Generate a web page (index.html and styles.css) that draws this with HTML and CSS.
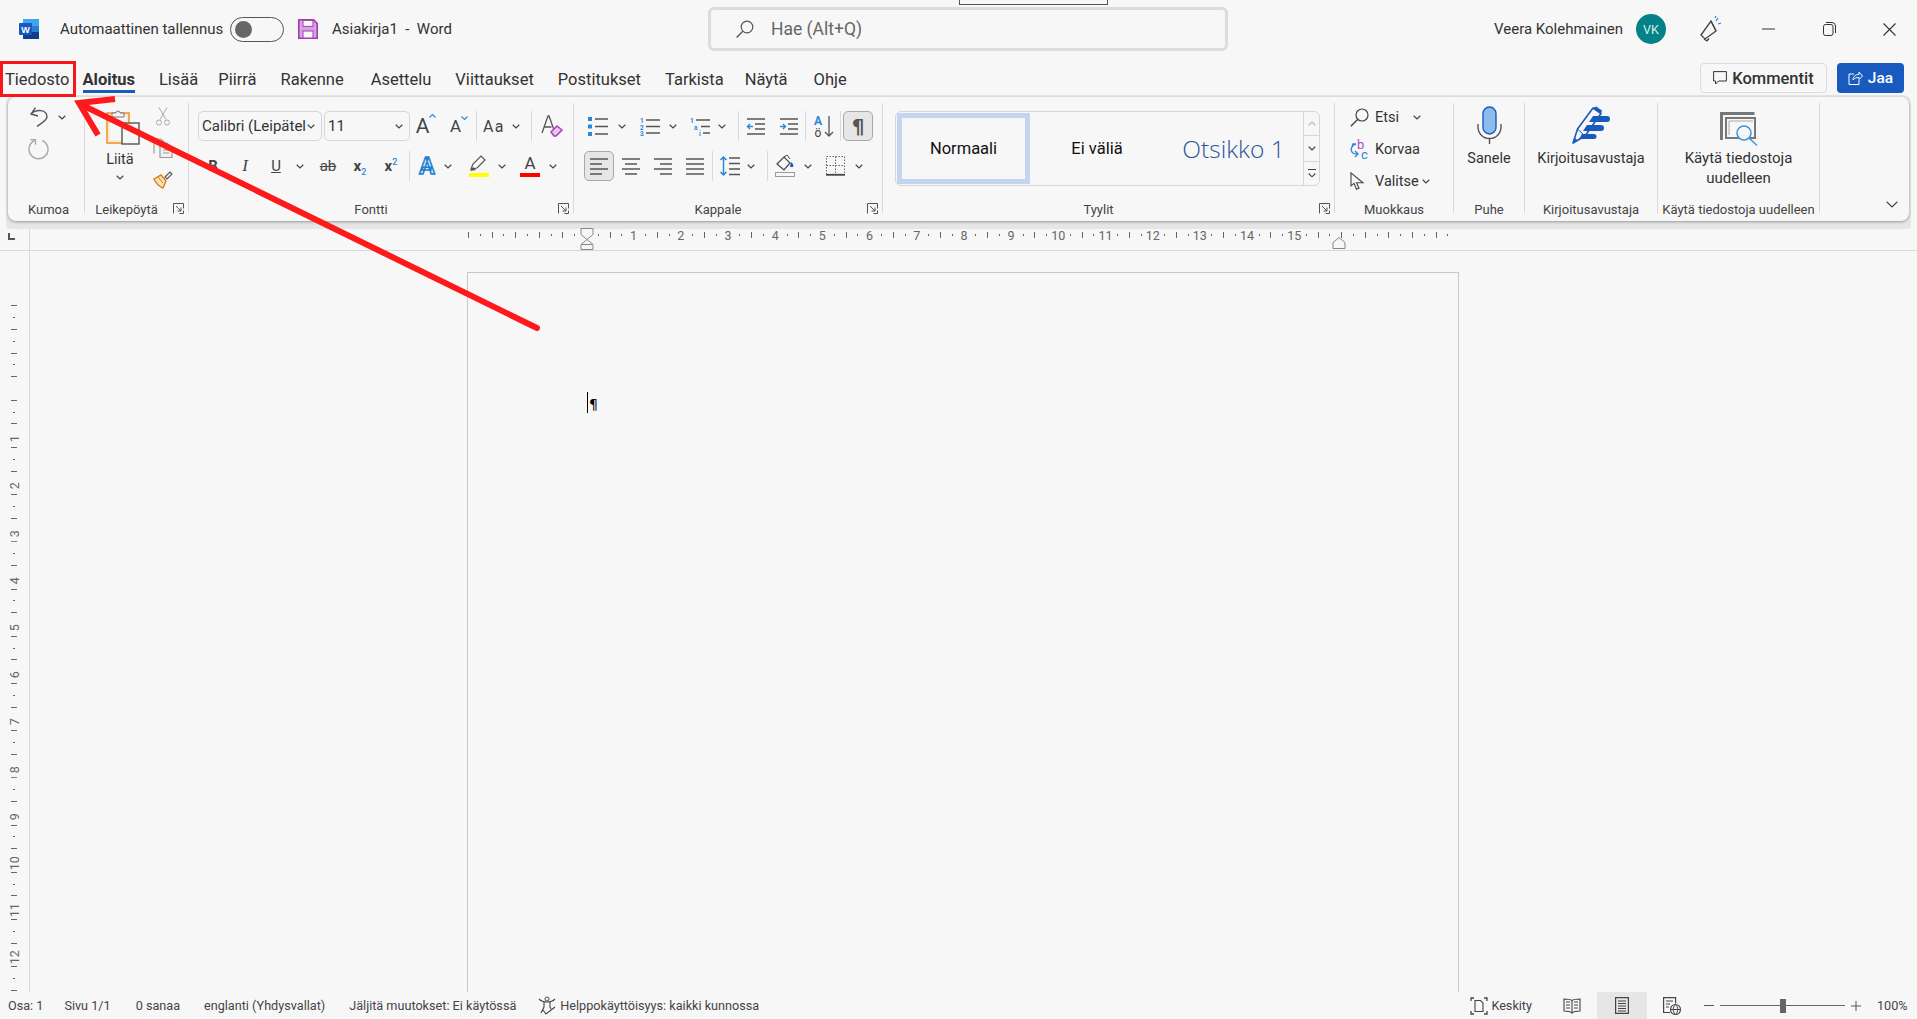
FILE: index.html
```html
<!DOCTYPE html>
<html lang="fi">
<head>
    <meta charset="UTF-8">
    <meta name="viewport" content="width=device-width, initial-scale=1.0">
    <title>Asiakirja1 - Word</title>
    <link rel="stylesheet" href="styles.css">
</head>
<body>
    <svg class="sprite" width="0" height="0">
        <symbol id="chev" viewBox="0 0 8 5"><path d="M.7.8l3.3 3.2L7.300.8" fill="none" stroke="#444" stroke-width="1.200"/></symbol>
        <symbol id="launcher" viewBox="0 0 11 11"><path d="M.5 10.500V.5h10v5M3 3l5 5M8 4.500V8H4.500M6.500 10.500h4v-3" fill="none" stroke="#555"/></symbol>
        <symbol id="align-left" viewBox="0 0 20 18"><path d="M1 2h18M1 7h12M1 12h18M1 17h12" stroke="#555" stroke-width="1.600"/></symbol>
        <symbol id="align-center" viewBox="0 0 20 18"><path d="M1 2h18M4 7h12M1 12h18M4 17h12" stroke="#555" stroke-width="1.600"/></symbol>
        <symbol id="align-right" viewBox="0 0 20 18"><path d="M1 2h18M7 7h12M1 12h18M7 17h12" stroke="#555" stroke-width="1.600"/></symbol>
        <symbol id="align-just" viewBox="0 0 20 18"><path d="M1 2h18M1 7h18M1 12h18M1 17h18" stroke="#555" stroke-width="1.600"/></symbol>
    </svg>

    <header class="titlebar">
        <div class="title-left">
            <svg class="word-logo" width="20" height="20" viewBox="0 0 20 20">
                <rect x="4" y="0" width="16" height="7" fill="#41a5ee"/>
                <rect x="4" y="7" width="16" height="6" fill="#2b7cd3"/>
                <rect x="4" y="13" width="16" height="7" fill="#103f91"/>
                <rect x="0" y="4" width="13" height="12" rx="1" fill="#185abd"/>
                <text x="6.500" y="13.500" class="word-w">W</text>
            </svg>
            <span class="autosave">Automaattinen tallennus</span>
            <span class="toggle"><i class="toggle-dot"></i></span>
            <svg class="save-icon" width="20" height="20" viewBox="0 0 20 20">
                <path d="M.8.8h14.800l3.600 3.600v14.800H.800z" fill="#d9a3e2" stroke="#a23cb3" stroke-width="1.600"/>
                <rect x="5" y="1.400" width="10" height="6" fill="#f7f7f7" stroke="#a23cb3"/>
                <rect x="5" y="12" width="10" height="7" fill="#f7f7f7" stroke="#a23cb3"/>
            </svg>
            <span class="doc-title">Asiakirja1 &nbsp;-&nbsp; Word</span>
        </div>
        <div class="search">
            <svg width="18" height="18" viewBox="0 0 18 18"><circle cx="11" cy="7" r="5.800" fill="none" stroke="#555" stroke-width="1.200"/><path d="M6.800 11.200L.6 17.500" stroke="#555" stroke-width="1.300"/></svg>
            <span>Hae (Alt+Q)</span>
        </div>
        <div class="title-right">
            <span class="user">Veera Kolehmainen</span>
            <span class="avatar">VK</span>
            <svg class="feedback" width="22" height="26" viewBox="0 0 22 26"><path d="M2 19L12 5l5 10-11 8z M5 23l3 1.800 2-2.300" fill="none" stroke="#444" stroke-width="1.300"/><path d="M12 5l5 10" stroke="#444" stroke-width="1.300"/><path d="M17 5l2-3M19 8l3-1M16 2l1-2" stroke="#2b88d8" stroke-width="1.300"/></svg>
            <svg class="win-min" width="13" height="2" viewBox="0 0 13 2"><path d="M0 1h13" stroke="#333"/></svg>
            <svg class="win-max" width="13" height="14" viewBox="0 0 13 14"><rect x=".5" y="2.500" width="9.500" height="11" rx="2" fill="none" stroke="#333"/><path d="M3 .5h6a3.500 3.500 0 0 1 3.500 3.500v7" fill="none" stroke="#333"/></svg>
            <svg class="win-close" width="13" height="13" viewBox="0 0 13 13"><path d="M.5.5l12 12M12.500.5l-12 12" stroke="#333" stroke-width="1.100"/></svg>
        </div>
    </header>

    <nav class="tabs">
        <span class="tab tab-file">Tiedosto</span>
        <span class="tab active">Aloitus</span>
        <span class="tab tab-insert">Lisää</span>
        <span class="tab">Piirrä</span>
        <span class="tab tab-design">Rakenne</span>
        <span class="tab">Asettelu</span>
        <span class="tab">Viittaukset</span>
        <span class="tab">Postitukset</span>
        <span class="tab tab-review">Tarkista</span>
        <span class="tab tab-view">Näytä</span>
        <span class="tab">Ohje</span>
        <div class="share">
            <button class="btn-comments">
                <svg width="14" height="14" viewBox="0 0 14 14"><path d="M.6.6h12.800v9.400H5.500L2.600 13v-3H.6z" fill="none" stroke="#333"/></svg>
                Kommentit
            </button>
            <button class="btn-share">
                <svg width="15" height="14" viewBox="0 0 15 14"><path d="M6 3H1v10.500h10V9M5 9c0-4 3-5.500 6-5.500V1l3.500 4L11 8.500V6.500C8.500 6.500 6.500 7 5 9z" fill="none" stroke="#fff"/></svg>
                Jaa
            </button>
        </div>
    </nav>

    <div class="ribbon-wrap">
        <div class="ribbon">
            <section class="group g-undo">
                <div class="group-body undo-rows">
                    <div class="row">
                        <span class="t w22 ml19"><svg width="20" height="20" viewBox="0 0 20 20"><path d="M7.500.6L3 7l7 2M3 7C8 2 19 2 19 10c0 3-5 6-10 9.500" fill="none" stroke="#555" stroke-width="1.400"/></svg></span>
                        <span class="t w26"><svg class="ch"><use href="#chev"/></svg></span>
                    </div>
                    <div class="row">
                        <span class="t w22 ml19"><svg width="21" height="21" viewBox="0 0 21 21"><path d="M6.800 2.500a9.500 9.500 0 1 0 7.400 0" fill="none" stroke="#aaa" stroke-width="1.400"/><path d="M2.500 1.800h5v5" fill="none" stroke="#aaa" stroke-width="1.400"/></svg></span>
                    </div>
                </div>
                <div class="group-label undo-label"><span>Kumoa</span></div>
            </section>

            <section class="group g-clip">
                <div class="group-body clip-body">
                    <div class="paste">
                        <svg width="34" height="37" viewBox="0 0 34 37">
                            <rect x="1" y="5" width="22" height="30" fill="#fbeccf" stroke="#e8912d" stroke-width="1.500"/>
                            <rect x="4" y="8" width="16" height="24" fill="#f7f7f7"/>
                            <path d="M6 9V5h4a2 2 0 0 1 4 0h4v4z" fill="#f7f7f7" stroke="#777"/>
                            <rect x="16" y="15" width="17" height="21" fill="#f7f7f7" stroke="#555" stroke-width="1.400"/>
                        </svg>
                        <span class="paste-text">Liitä</span>
                        <svg class="ch paste-ch"><use href="#chev"/></svg>
                    </div>
                    <div class="clip-side">
                        <span class="t h26"><svg width="14" height="19" viewBox="0 0 14 19"><path d="M3 .5l7 12M11 .5l-7 12" stroke="#aaa"/><circle cx="3" cy="15.500" r="2.500" fill="none" stroke="#aaa"/><circle cx="11" cy="15.500" r="2.500" fill="none" stroke="#aaa"/></svg></span>
                        <span class="t h38"><svg width="20" height="20" viewBox="0 0 20 20"><path d="M1 15.500V1h7l3 3" fill="none" stroke="#999" stroke-width="1.200"/><path d="M7 5h7l5 5v9.500H7z" fill="#f0f0f0" stroke="#999" stroke-width="1.200"/><path d="M10 12h6M10 15h6" stroke="#999"/></svg></span>
                        <span class="t h24"><svg width="20" height="20" viewBox="0 0 20 20"><path d="M12 8l5-5 2 2-5 5z" fill="#f7f7f7" stroke="#555" stroke-width="1.100"/><path d="M1 10l7-4 5 6-3 7c-3-1-7-5-9-9z" fill="#fbe2bb" stroke="#dd7e12" stroke-width="1.400"/><path d="M5 8l5 6" stroke="#dd7e12"/></svg></span>
                    </div>
                </div>
                <div class="group-label"><span>Leikepöytä</span><svg class="launcher"><use href="#launcher"/></svg></div>
            </section>

            <section class="group g-font">
                <div class="group-body rows">
                    <div class="row pl9">
                        <div class="combo w124"><span>Calibri (Leipätel</span><svg class="ch"><use href="#chev"/></svg></div>
                        <i class="w2"></i>
                        <div class="combo w86"><span>11</span><svg class="ch"><use href="#chev"/></svg></div>
                        <span class="t w32 grow-a">A<svg width="7" height="4" viewBox="0 0 7 4"><path d="M.5 3.500l3-3 3 3" fill="none" stroke="#2b88d8" stroke-width="1.200"/></svg></span>
                        <span class="t w34 shrink-a">A<svg width="7" height="4" viewBox="0 0 7 4"><path d="M.5.5l3 3 3-3" fill="none" stroke="#2b88d8" stroke-width="1.200"/></svg></span>
                        <i class="sep"></i>
                        <span class="t w34 case-a">Aa</span>
                        <span class="t w10"><svg class="ch"><use href="#chev"/></svg></span>
                        <i class="w10"></i>
                        <i class="sep"></i>
                        <span class="t w40"><svg width="22" height="22" viewBox="0 0 22 22"><path d="M1 18L7 1h1l5 14M3.500 12h7" fill="none" stroke="#555" stroke-width="1.300"/><path d="M10 17l6-6 5 4-6 6h-2z" fill="#e9c6ee" stroke="#a742b5" stroke-width="1.500"/></svg></span>
                    </div>
                    <div class="row pl8">
                        <span class="t w32 fmt fmt-b">B</span>
                        <span class="t w32 fmt fmt-i">I</span>
                        <span class="t w30 fmt fmt-u">U</span>
                        <span class="t w18"><svg class="ch"><use href="#chev"/></svg></span>
                        <span class="t w38 fmt fmt-s">ab</span>
                        <span class="t w26 fmt-x">x<sub>2</sub></span>
                        <span class="t w36 fmt-x">x<sup>2</sup></span>
                        <i class="sep"></i>
                        <span class="t w34"><svg width="24" height="24" viewBox="0 0 24 24"><text x="12" y="20" class="effect-a">A</text></svg></span>
                        <span class="t w8"><svg class="ch"><use href="#chev"/></svg></span>
                        <i class="w12"></i>
                        <span class="t w30"><svg width="20" height="22" viewBox="0 0 20 22"><path d="M2 14l2-5 8-8 4 4-8 8z" fill="#f7f7f7" stroke="#555" stroke-width="1.200"/><path d="M1 16l3-4 3 3z" fill="#555"/><rect y="18" width="20" height="4" fill="#ffff00"/></svg></span>
                        <span class="t w16"><svg class="ch"><use href="#chev"/></svg></span>
                        <i class="w5"></i>
                        <span class="t w30 color-a">A<i class="color-bar"></i></span>
                        <span class="t w16"><svg class="ch"><use href="#chev"/></svg></span>
                    </div>
                </div>
                <div class="group-label"><span>Fontti</span><svg class="launcher"><use href="#launcher"/></svg></div>
            </section>

            <section class="group g-para">
                <div class="group-body rows">
                    <div class="row pl8">
                        <span class="t w32"><svg width="20" height="19" viewBox="0 0 20 19"><path d="M0 0h4v4H0zM0 7.500h4v4H0zM0 15h4v4H0z" fill="#2b88d8"/><path d="M7 2h13M7 9.500h13M7 17h13" stroke="#555" stroke-width="1.500"/></svg></span>
                        <span class="t w16"><svg class="ch"><use href="#chev"/></svg></span>
                        <i class="w3"></i>
                        <span class="t w34"><svg width="20" height="19" viewBox="0 0 20 19"><text x="0" y="6" class="tiny-num">1</text><text x="0" y="12.500" class="tiny-num">2</text><text x="0" y="19" class="tiny-num">3</text><path d="M6 3h14M6 9.500h14M6 16h14" stroke="#555" stroke-width="1.500"/></svg></span>
                        <span class="t w12"><svg class="ch"><use href="#chev"/></svg></span>
                        <i class="w6"></i>
                        <span class="t w30"><svg width="20" height="19" viewBox="0 0 20 19"><text x="0" y="6" class="tiny-num">1</text><text x="4" y="12.500" class="tiny-num">a</text><text x="9" y="19" class="tiny-num">i</text><path d="M6 3h14M11 9.500h9M13 16h7" stroke="#555" stroke-width="1.500"/></svg></span>
                        <span class="t w14"><svg class="ch"><use href="#chev"/></svg></span>
                        <i class="w9"></i>
                        <i class="sep"></i>
                        <span class="t w34"><svg width="18" height="17" viewBox="0 0 18 17"><path d="M0 1h18M8 6h10M8 11h10M0 16h18" stroke="#555" stroke-width="1.400"/><path d="M6 8.500H.5M3 6L.5 8.500 3 11" fill="none" stroke="#2b88d8" stroke-width="1.400"/></svg></span>
                        <span class="t w32"><svg width="18" height="17" viewBox="0 0 18 17"><path d="M0 1h18M8 6h10M8 11h10M0 16h18" stroke="#555" stroke-width="1.400"/><path d="M0 8.500h5.500M3 6l2.500 2.500L3 11" fill="none" stroke="#2b88d8" stroke-width="1.400"/></svg></span>
                        <i class="sep"></i>
                        <span class="t w34"><svg width="20" height="23" viewBox="0 0 20 23"><text x="5" y="10" class="sort-a">A</text><text x="5" y="22" class="sort-o">ö</text><path d="M16 1v20M12 17l4 4 4-4" fill="none" stroke="#555" stroke-width="1.300"/></svg></span>
                        <i class="sep"></i>
                        <i class="w2"></i>
                        <span class="t w30 pressed pilcrow">¶</span>
                    </div>
                    <div class="row pl10">
                        <span class="t w30 pressed"><svg class="align"><use href="#align-left"/></svg></span>
                        <span class="t w34"><svg class="align"><use href="#align-center"/></svg></span>
                        <span class="t w30"><svg class="align"><use href="#align-right"/></svg></span>
                        <span class="t w34"><svg class="align"><use href="#align-just"/></svg></span>
                        <i class="sep"></i>
                        <span class="t w34"><svg width="20" height="20" viewBox="0 0 20 20"><path d="M9 2h11M9 7.500h11M9 13h11M9 18.500h11" stroke="#555" stroke-width="1.500"/><path d="M3.500 1v18M.5 4l3-3 3 3M.5 16l3 3 3-3" fill="none" stroke="#2b88d8" stroke-width="1.500"/></svg></span>
                        <span class="t w8"><svg class="ch"><use href="#chev"/></svg></span>
                        <i class="w12"></i>
                        <i class="sep"></i>
                        <span class="t w34"><svg width="20" height="22" viewBox="0 0 20 22"><path d="M2 9l7-7 6 6-6 7z" fill="#f7f7f7" stroke="#444" stroke-width="1.200"/><path d="M9 2l3-2 3 4" fill="none" stroke="#444"/><path d="M16 7c2 2 3 3 2 5h-3z" fill="#185abd"/><rect x=".5" y="17.500" width="19" height="4" fill="#f7f7f7" stroke="#999"/></svg></span>
                        <span class="t w12"><svg class="ch"><use href="#chev"/></svg></span>
                        <i class="w6"></i>
                        <span class="t w30"><svg width="19" height="20" viewBox="0 0 19 20"><path d="M.5.500h18v18h-18zM9.500.5v18M.5 9.500h18" fill="none" stroke="#666" stroke-dasharray="1.500 1.500"/><path d="M0 18.800h19" stroke="#444" stroke-width="1.800"/></svg></span>
                        <span class="t w18"><svg class="ch"><use href="#chev"/></svg></span>
                    </div>
                </div>
                <div class="group-label"><span>Kappale</span><svg class="launcher"><use href="#launcher"/></svg></div>
            </section>

            <section class="group g-styles">
                <div class="group-body styles-body">
                    <div class="gallery">
                        <span class="style-item style-normal">Normaali</span>
                        <span class="style-item style-nospace">Ei väliä</span>
                        <span class="style-item style-h1">Otsikko 1</span>
                        <div class="gallery-scroll">
                            <span class="t"><svg width="8" height="5" viewBox="0 0 8 5"><path d="M.7 4.200L4 1l3.300 3.200" fill="none" stroke="#bbb" stroke-width="1.200"/></svg></span>
                            <span class="t"><svg class="ch"><use href="#chev"/></svg></span>
                            <span class="t"><svg width="8" height="9" viewBox="0 0 8 9"><path d="M0 .5h8M.7 4.500L4 7.800l3.300-3.300" fill="none" stroke="#444" stroke-width="1.100"/></svg></span>
                        </div>
                    </div>
                </div>
                <div class="group-label"><span>Tyylit</span><svg class="launcher"><use href="#launcher"/></svg></div>
            </section>

            <section class="group g-edit">
                <div class="group-body edit-body">
                    <div class="edit-row">
                        <span class="edit-icon"><svg width="19" height="19" viewBox="0 0 19 19"><circle cx="12" cy="7" r="6" fill="none" stroke="#444" stroke-width="1.200"/><path d="M7.600 11.400L.8 18.200" stroke="#444" stroke-width="1.400"/></svg></span>
                        <span class="w36 edit-text">Etsi</span>
                        <span class="t w12"><svg class="ch"><use href="#chev"/></svg></span>
                    </div>
                    <div class="edit-row">
                        <span class="edit-icon"><svg width="19" height="20" viewBox="0 0 19 20"><text x="7" y="10" class="rep-b">b</text><text x="11" y="19.500" class="rep-c">c</text><path d="M6 5C2 6 0 10 2 13c1 2 3 2 6 2M5 12l3 3-3 3M2 8l1-3 3 0" fill="none" stroke="#2b88d8" stroke-width="1.400"/></svg></span>
                        <span class="edit-text">Korvaa</span>
                    </div>
                    <div class="edit-row">
                        <span class="edit-icon"><svg width="14" height="18" viewBox="0 0 14 18"><path d="M1 .8v13l3-2.500 2.500 6 2.500-1-2.500-5.500H13z" fill="#f7f7f7" stroke="#444" stroke-width="1.100"/></svg></span>
                        <span class="w45 edit-text">Valitse</span>
                        <span class="t w12"><svg class="ch"><use href="#chev"/></svg></span>
                    </div>
                </div>
                <div class="group-label center"><span>Muokkaus</span></div>
            </section>

            <section class="group g-speech">
                <div class="group-body big">
                    <svg width="25" height="38" viewBox="0 0 25 38">
                        <rect x="6" y="1" width="13" height="27" rx="6.500" fill="#8bbcec" stroke="#185abd" stroke-width="1.400"/>
                        <path d="M1 18v3a11.500 11.500 0 0 0 23 0v-3M12.500 32v6" fill="none" stroke="#555" stroke-width="1.400"/>
                    </svg>
                    <span class="big-text">Sanele</span>
                </div>
                <div class="group-label center"><span>Puhe</span></div>
            </section>

            <section class="group g-editor">
                <div class="group-body big">
                    <svg width="38" height="38" viewBox="0 0 38 38">
                        <path d="M1 37L5.500 23 21 2l8 5.500L13 30z" fill="#f7f7f7" stroke="#185abd" stroke-width="1.600" stroke-linejoin="round"/>
                        <path d="M5.500 23L13 30M1 37l4-2.500-2-2z" fill="#185abd" stroke="#185abd"/>
                        <path d="M21 2l3-1.500 6 4-1 3z" fill="#185abd"/>
                        <path d="M21 10h14a3 3 0 0 1 0 6H17zM15 19h14a3 3 0 0 1 0 6H11zM10 28h12a2.500 2.500 0 0 1 0 5H7z" fill="#185abd"/>
                    </svg>
                    <span class="big-text">Kirjoitusavustaja</span>
                </div>
                <div class="group-label center"><span>Kirjoitusavustaja</span></div>
            </section>

            <section class="group g-reuse">
                <div class="group-body big">
                    <svg class="reuse-icon" width="38" height="35" viewBox="0 0 38 35">
                        <path d="M1.500 29V2.500h33" fill="none" stroke="#777" stroke-width="3"/>
                        <rect x="6" y="7" width="29" height="20" fill="none" stroke="#777" stroke-width="2"/>
                        <path d="M9 24V10h24" fill="none" stroke="#aaa"/>
                        <circle cx="24" cy="22" r="7" fill="#f7f7f7" stroke="#3a96dd" stroke-width="1.500"/>
                        <path d="M29 27l8 7.500" stroke="#3a96dd" stroke-width="1.500"/>
                    </svg>
                    <span class="big-text">Käytä tiedostoja<br>uudelleen</span>
                </div>
                <div class="group-label center"><span>Käytä tiedostoja uudelleen</span></div>
            </section>

            <svg class="collapse" width="12" height="7" viewBox="0 0 12 7"><path d="M.7.8L6 6l5.300-5.200" fill="none" stroke="#444" stroke-width="1.200"/></svg>
        </div>
    </div>

    <div class="ruler-row">
        <div class="ruler-corner"><i class="tab-stop"></i></div>
        <div class="hruler">
            <span>1</span><span>2</span><span>3</span><span>4</span><span>5</span>
            <span>6</span><span>7</span><span>8</span><span>9</span><span>10</span>
            <span>11</span><span>12</span><span>13</span><span>14</span><span>15</span>
            <svg class="indent-left" width="16" height="22" viewBox="0 0 16 22"><path d="M2 .5h12v6l-6 5-6-5z" fill="#f7f7f7" stroke="#888"/><path d="M8 11.500l6 5v5H2v-5zM2 16.500h12" fill="#f7f7f7" stroke="#888"/></svg>
            <svg class="indent-right" width="16" height="12" viewBox="0 0 16 12"><path d="M8 .5l6 5v6H2v-6z" fill="#f7f7f7" stroke="#888"/></svg>
        </div>
    </div>

    <main class="doc-row">
        <div class="vruler">
            <span class="v-blank"></span>
            <span>1</span><span>2</span><span>3</span><span>4</span><span>5</span><span>6</span>
            <span>7</span><span>8</span><span>9</span><span>10</span><span>11</span><span>12</span>
        </div>
        <div class="canvas">
            <div class="page">
                <div class="first-line"><i class="caret"></i><span class="para-mark">¶</span></div>
            </div>
        </div>
    </main>

    <footer class="statusbar">
        <span class="s-osa">Osa: 1</span>
        <span class="s-sivu">Sivu 1/1</span>
        <span>0 sanaa</span>
        <span>englanti (Yhdysvallat)</span>
        <span class="s-track">Jäljitä muutokset: Ei käytössä</span>
        <span class="a11y">
            <svg width="20" height="20" viewBox="0 0 20 20"><circle cx="9" cy="3" r="2" fill="none" stroke="#444"/><path d="M1 3c3 3 5 3 8 3s5 0 8-3M6 6v5l-3 6M12 6v5l1 2M5 14l3 4 9-7" fill="none" stroke="#444" stroke-width="1.100"/></svg>
            Helppokäyttöisyys: kaikki kunnossa
        </span>
        <div class="status-right">
            <span class="focus">
                <svg width="18" height="18" viewBox="0 0 18 18"><path d="M1 4V1h3M14 1h3v3M17 14v3h-3M4 17H1v-3" fill="none" stroke="#444" stroke-width="1.300"/><path d="M5 3.500h5.500L13 6v8.500H5z" fill="none" stroke="#444" stroke-width="1.100"/></svg>
                Keskity
            </span>
            <svg class="view-read" width="18" height="16" viewBox="0 0 18 16"><path d="M9 2.500C7 1 4 1 1 1v12c3 0 6 0 8 2 2-2 5-2 8-2V1c-3 0-6 0-8 1.500zM9 2.500V15M3 4h4M3 7h4M3 10h4M11 4h4M11 7h4M11 10h4" fill="none" stroke="#444" stroke-width="1.100"/></svg>
            <span class="view-print"><svg width="14" height="17" viewBox="0 0 14 17"><path d="M.6.6h12.800v15.800H.6z" fill="none" stroke="#444" stroke-width="1.200"/><path d="M3 4h8M3 6.500h8M3 9h8M3 11.500h8M3 14h8" stroke="#444"/></svg></span>
            <svg class="view-web" width="18" height="18" viewBox="0 0 18 18"><path d="M7 15.500H.6V.6h12v6" fill="none" stroke="#444" stroke-width="1.200"/><path d="M3 4h7M3 7h4M3 10h3" stroke="#444"/><circle cx="12.500" cy="12.500" r="5" fill="#f7f7f7" stroke="#444" stroke-width="1.100"/><path d="M7.500 12.500h10M12.500 7.500c-3 3-3 7 0 10M12.500 7.500c3 3 3 7 0 10" fill="none" stroke="#444"/></svg>
            <i class="zoom-minus"></i>
            <span class="zoom-slider"><i class="zoom-thumb"></i></span>
            <svg class="zoom-plus" width="10" height="10" viewBox="0 0 10 10"><path d="M0 5h10M5 0v10" stroke="#555"/></svg>
            <span class="zoom-pct">100%</span>
        </div>
    </footer>

    <!-- annotation drawn on top of the screenshot -->
    <div class="mark-box"></div>
    <div class="clip-top"></div>
    <svg class="mark-arrow" width="1917" height="1019" viewBox="0 0 1917 1019">
        <path d="M537 328L80 104" fill="none" stroke="#fe1a1a" stroke-width="6" stroke-linecap="round"/>
        <path d="M115 99L79 103l19 32" fill="none" stroke="#fe1a1a" stroke-width="6"/>
    </svg>
</body>
</html>
```

FILE: styles.css
```css
* {
    box-sizing: border-box;
}
body {
    margin: 0;
    width: 1917px;
    height: 1019px;
    overflow: hidden;
    display: flex;
    flex-direction: column;
    position: relative;
    font-family: Roboto, "Liberation Sans", sans-serif;
    font-size: 14px;
    color: #333;
    background-color: #f7f7f7;
}
i {
    display: block;
    flex: none;
}
svg {
    flex: none;
    overflow: visible;
}
.sprite {
    position: absolute;
}

/* title bar */
.titlebar {
    display: flex;
    align-items: center;
    height: 58px;
    flex: none;
}
.title-left {
    display: flex;
    align-items: center;
    width: 708px;
    padding-left: 19px;
    flex: none;
}
.word-w {
    font: bold 9px "Liberation Sans", sans-serif;
    fill: #fff;
    text-anchor: middle;
}
.autosave {
    margin-left: 21px;
    width: 162px;
    font-size: 15px;
    white-space: nowrap;
}
.toggle {
    display: flex;
    align-items: center;
    width: 54px;
    height: 25px;
    margin-left: 8px;
    padding-left: 4px;
    border: 1px solid #555;
    border-radius: 13px;
}
.toggle-dot {
    width: 17px;
    height: 17px;
    border-radius: 50%;
    background-color: #666;
}
.save-icon {
    margin-left: 14px;
}
.doc-title {
    margin-left: 14px;
    font-size: 15px;
    white-space: nowrap;
}
.search {
    display: flex;
    align-items: center;
    gap: 17px;
    width: 520px;
    height: 44px;
    margin-top: -1px;
    padding-left: 25px;
    border: 3px solid #dcdcdc;
    border-radius: 6px;
    font-size: 17.5px;
    color: #666;
}
.title-right {
    display: flex;
    align-items: center;
    flex: 1;
}
.user {
    margin-left: 266px;
    width: 129px;
    font-size: 15px;
    white-space: nowrap;
}
.avatar {
    display: flex;
    align-items: center;
    justify-content: center;
    width: 30px;
    height: 30px;
    margin-left: 13px;
    border-radius: 50%;
    background-color: #038387;
    color: #d8eeee;
    font-size: 12.5px;
}
.feedback {
    margin-left: 33px;
}
.win-min {
    margin-left: 41px;
}
.win-max {
    margin-left: 48px;
}
.win-close {
    margin-left: 47px;
}

/* tabs */
.tabs {
    display: flex;
    gap: 24px;
    height: 37px;
    padding-top: 7px;
    padding-left: 5px;
    flex: none;
    font-size: 16.5px;
}
.tab {
    position: relative;
    height: 28px;
    line-height: 29px;
    white-space: nowrap;
}
.tab-file {
    margin-right: -11px;
}
.tab-insert {
    margin-right: -4px;
}
.tab-design {
    margin-right: 3px;
}
.tab-review {
    margin-right: -3px;
}
.tab-view {
    margin-right: 2px;
}
.tab.active {
    font-weight: 700;
}
.tab.active::after {
    content: "";
    position: absolute;
    left: 0;
    right: 0;
    bottom: 0;
    height: 3px;
    background-color: #185abd;
}
.share {
    display: flex;
    gap: 10px;
    margin: -2px 13px 0 auto;
}
.share button {
    display: flex;
    align-items: center;
    justify-content: center;
    gap: 5px;
    height: 30px;
    padding: 0;
    border-radius: 4px;
    font-family: inherit;
    font-size: 15.5px;
    font-weight: 500;
}
.share .btn-comments {
    width: 127px;
    border: 1px solid #dcdcdc;
    background-color: #f7f7f7;
    color: #333;
    font-size: 16.5px;
}
.btn-share {
    width: 67px;
    border: none;
    background-color: #185abd;
    color: #fff;
}

/* ribbon */
.ribbon-wrap {
    height: 134px;
    margin: 0 6px;
    padding: 2px 2px 8px;
    flex: none;
    background-color: #e6e6e6;
    border-radius: 8px 8px 4px 4px;
}
.ribbon {
    display: flex;
    height: 124px;
    padding-top: 6px;
    background-color: #f7f7f7;
    border-radius: 8px;
    box-shadow: 0 1px 3px rgba(0, 0, 0, 0.35);
}
.group {
    display: flex;
    flex-direction: column;
    height: 110px;
    flex: none;
    border-right: 1px solid #dadada;
}
.g-undo { width: 77px; }
.g-clip { width: 104px; }
.g-font { width: 385px; }
.g-para { width: 309px; }
.g-styles { width: 452px; }
.g-edit { width: 119px; }
.g-speech { width: 71px; }
.g-editor { width: 133px; }
.g-reuse { width: 162px; }
.group-body {
    height: 98px;
    flex: none;
}
.group-label {
    display: flex;
    height: 12px;
    line-height: 17px;
    font-size: 13px;
    color: #444;
}
.group-label span {
    flex: 1;
    text-align: center;
    white-space: nowrap;
}
.undo-label {
    padding-left: 5px;
}
.launcher {
    width: 11px;
    height: 11px;
    margin: 2px 4px 0 5px;
    flex: none;
}
.rows {
    display: flex;
    flex-direction: column;
    gap: 10px;
    padding-top: 8px;
}
.row {
    display: flex;
    align-items: center;
    height: 30px;
}
.undo-rows {
    display: flex;
    flex-direction: column;
    gap: 3px;
}
.undo-rows .row {
    height: 28px;
}
.t {
    display: flex;
    align-items: center;
    justify-content: center;
    flex: none;
}
.ch {
    width: 8px;
    height: 5px;
    flex: none;
}
.sep {
    width: 1px;
    height: 30px;
    background-color: #dadada;
}
.pl8 { padding-left: 8px; }
.pl9 { padding-left: 9px; }
.pl10 { padding-left: 10px; }
.ml19 { margin-left: 19px; }
.w2 { width: 2px; }
.w3 { width: 3px; }
.w5 { width: 5px; }
.w6 { width: 6px; }
.w8 { width: 8px; }
.w9 { width: 9px; }
.w10 { width: 10px; }
.w12 { width: 12px; }
.w14 { width: 14px; }
.w16 { width: 16px; }
.w18 { width: 18px; }
.w22 { width: 22px; }
.w26 { width: 26px; }
.w30 { width: 30px; }
.w32 { width: 32px; }
.w34 { width: 34px; }
.w36 { width: 36px; }
.w38 { width: 38px; }
.w40 { width: 40px; }
.w45 { width: 45px; }
.w86 { width: 86px; }
.w124 { width: 124px; }
.h24 { height: 24px; }
.h26 { height: 26px; }
.h38 { height: 38px; }

/* clipboard */
.clip-body {
    display: flex;
}
.paste {
    display: flex;
    flex-direction: column;
    align-items: center;
    width: 68px;
    padding: 5px 0 0 8px;
}
.paste-text {
    margin: 6px 6px 0 0;
    line-height: 18px;
    font-size: 14.5px;
}
.paste-ch {
    margin: 6px 6px 0 0;
}
.clip-side {
    display: flex;
    flex-direction: column;
    width: 20px;
}

/* font group */
.combo {
    display: flex;
    align-items: center;
    justify-content: space-between;
    height: 30px;
    padding: 0 6px 0 3px;
    flex: none;
    border: 1px solid #d6d6d6;
    border-radius: 5px;
    font-size: 15px;
    white-space: nowrap;
}
.grow-a,
.shrink-a {
    align-items: flex-start;
    color: #444;
}
.grow-a {
    font-size: 21px;
}
.shrink-a {
    font-size: 17px;
}
.case-a {
    font-size: 16px;
    letter-spacing: 1.500px;
    color: #444;
}
.fmt {
    font-size: 15px;
    color: #444;
}
.fmt-b {
    font-weight: 700;
}
.fmt-i {
    font-family: "Liberation Serif", serif;
    font-style: italic;
    font-size: 17px;
}
.fmt-u {
    text-decoration: underline;
}
.fmt-s {
    text-decoration: line-through;
}
.fmt-x {
    font-size: 15px;
    font-weight: 700;
    color: #444;
}
.fmt-x sub,
.fmt-x sup {
    font-size: 9px;
    line-height: 10px;
    font-weight: 500;
    color: #2b88d8;
}
.fmt-x sub {
    margin-top: 11px;
}
.fmt-x sup {
    margin-top: -9px;
}
.effect-a {
    font: bold 23px Roboto, sans-serif;
    text-anchor: middle;
    fill: #d6ebfb;
    stroke: #1e80cf;
    stroke-width: 1.500px;
}
.color-a {
    flex-direction: column;
    font-size: 17px;
    line-height: 17px;
    color: #444;
}
.color-bar {
    width: 20px;
    height: 4px;
    margin-top: 1px;
    background-color: #f00;
}

/* paragraph group */
.tiny-num {
    font: bold 6.500px Roboto, sans-serif;
    fill: #2b88d8;
}
.sort-a {
    font: bold 12px Roboto, sans-serif;
    fill: #2b88d8;
    text-anchor: middle;
}
.sort-o {
    font: 12px Roboto, sans-serif;
    fill: #444;
    text-anchor: middle;
}
.rep-b {
    font: 13px Roboto, sans-serif;
    fill: #b146c2;
}
.rep-c {
    font: 13px Roboto, sans-serif;
    fill: #2b88d8;
}
.pressed {
    height: 30px;
    background-color: #e6e6e6;
    border: 1px solid #a8a8a8;
    border-radius: 5px;
}
.pilcrow {
    font-family: "DejaVu Sans", sans-serif;
    font-size: 20px;
    line-height: 1;
    font-weight: 700;
    color: #555;
}
.align {
    width: 20px;
    height: 18px;
}

/* styles gallery */
.styles-body {
    padding: 8px 0 0 12px;
}
.gallery {
    display: flex;
    align-items: stretch;
    width: 425px;
    height: 75px;
    padding: 1px;
    border: 1px solid #d6d6d6;
    border-radius: 6px;
}
.style-item {
    display: flex;
    align-items: center;
    justify-content: center;
    flex: none;
    font-size: 16.5px;
    color: #111;
}
.style-normal {
    width: 133px;
    border: 5px solid #c3d5f0;
}
.style-nospace {
    width: 134px;
}
.style-h1 {
    width: 139px;
    font-family: "Open Sans", sans-serif;
    font-weight: 300;
    font-size: 24.500px;
    color: #2f5496;
}
.gallery-scroll {
    display: flex;
    flex-direction: column;
    flex: 1;
    margin: -2px -2px -2px 0;
    border-left: 1px solid #d6d6d6;
}
.gallery-scroll .t {
    flex: 1;
    border-bottom: 1px solid #d6d6d6;
}
.gallery-scroll .t:last-child {
    border-bottom: none;
}

/* editing */
.edit-body {
    display: flex;
    flex-direction: column;
    gap: 4px;
    padding-left: 15px;
}
.edit-row {
    display: flex;
    align-items: center;
    height: 28px;
}
.edit-icon {
    display: flex;
    width: 25px;
    flex: none;
}
.edit-text {
    font-size: 14.5px;
}

/* large buttons */
.big {
    display: flex;
    flex-direction: column;
    align-items: center;
    padding-top: 3px;
}
.reuse-icon {
    margin: 5px 0 -3px;
}
.big-text {
    margin-top: 5px;
    line-height: 20px;
    text-align: center;
    font-size: 14.5px;
    white-space: nowrap;
}
.g-reuse .big-text {
    font-size: 15px;
}
.collapse {
    align-self: flex-end;
    margin: 0 0 13px 66px;
}

/* rulers */
.ruler-row {
    display: flex;
    height: 22px;
    flex: none;
    border-bottom: 1px solid #d8d8d8;
}
.ruler-corner {
    width: 30px;
    padding: 3px 0 0 8px;
    flex: none;
    border-right: 1px solid #d8d8d8;
}
.tab-stop {
    width: 7px;
    height: 7px;
    margin-top: 1px;
    border-left: 2px solid #555;
    border-bottom: 2px solid #555;
}
.hruler {
    position: relative;
    display: flex;
    width: 980px;
    height: 21px;
    margin-left: 438px;
    padding-left: 142px;
    background-image:
        repeating-linear-gradient(90deg, #666 0 1px, transparent 1px 23.6px),
        repeating-linear-gradient(90deg, transparent 0 11.8px, #666 11.8px 12.8px, transparent 12.8px 23.6px);
    background-size: 100% 6px, 100% 2px;
    background-position: 0 3px, 0 5px;
    background-repeat: no-repeat;
}
.hruler span {
    display: flex;
    justify-content: center;
    width: 47.2px;
    flex: none;
    font-size: 12.5px;
    line-height: 13px;
    color: #666;
    background: linear-gradient(#f7f7f7, #f7f7f7) center / 16px 100% no-repeat;
}
.indent-left {
    position: absolute;
    left: 111px;
    top: -1px;
}
.indent-right {
    position: absolute;
    left: 863px;
    top: 8px;
}
.doc-row {
    display: flex;
    flex: 1;
    min-height: 0;
}
.vruler {
    display: flex;
    flex-direction: column;
    width: 30px;
    padding-top: 117px;
    flex: none;
    overflow: hidden;
    border-right: 1px solid #d8d8d8;
    background-image:
        repeating-linear-gradient(0deg, #666 0 1px, transparent 1px 23.6px),
        repeating-linear-gradient(0deg, transparent 0 11.8px, #666 11.8px 12.8px, transparent 12.8px 23.6px);
    background-size: 6px 100%, 2px 100%;
    background-position: 11px 46px, 13px 46px;
    background-repeat: no-repeat;
}
.vruler span {
    display: flex;
    align-items: center;
    justify-content: center;
    height: 47.2px;
    flex: none;
    font-size: 12.5px;
    line-height: 12px;
    color: #666;
    writing-mode: vertical-rl;
    transform: rotate(180deg);
    background: linear-gradient(#f7f7f7, #f7f7f7) center / 100% 16px no-repeat;
}
.canvas {
    flex: 1;
    padding: 21px 0 0 437px;
}
.page {
    width: 992px;
    height: 100%;
    padding: 119px 0 0 119px;
    border: 1px solid #c8c8c8;
    border-bottom: none;
}
.first-line {
    display: flex;
    height: 21px;
}
.caret {
    width: 1px;
    height: 21px;
    background-color: #000;
}
.para-mark {
    margin: 3px 0 0 1px;
    font-family: "DejaVu Sans", sans-serif;
    font-size: 14px;
    line-height: 18px;
    color: #000;
}

/* status bar */
.statusbar {
    display: flex;
    align-items: center;
    gap: 24px;
    height: 27px;
    padding-left: 8px;
    flex: none;
    font-size: 12.65px;
    color: #444;
    white-space: nowrap;
}
.s-osa {
    margin-right: -3px;
}
.s-sivu {
    margin-right: 1px;
}
.s-track {
    margin-right: -2px;
}
.a11y {
    display: flex;
    align-items: center;
    gap: 2px;
}
.status-right {
    display: flex;
    align-items: center;
    height: 27px;
    margin-left: auto;
    padding-right: 10px;
}
.focus {
    display: flex;
    align-items: center;
    gap: 3px;
}
.view-read {
    margin-left: 31px;
}
.view-print {
    display: flex;
    align-items: center;
    justify-content: center;
    width: 50px;
    height: 27px;
    margin-left: 16px;
    background-color: #e6e6e6;
}
.view-web {
    margin-left: 16px;
}
.zoom-minus {
    width: 10px;
    height: 1px;
    margin-left: 23px;
    background-color: #555;
}
.zoom-slider {
    display: flex;
    align-items: center;
    justify-content: center;
    width: 125px;
    height: 1px;
    margin-left: 6px;
    background-color: #666;
}
.zoom-thumb {
    width: 6px;
    height: 14px;
    background-color: #666;
}
.zoom-plus {
    margin-left: 6px;
}
.zoom-pct {
    margin-left: 16px;
    width: 30px;
}

/* overlays */
.mark-box {
    position: absolute;
    left: 0;
    top: 61px;
    width: 76px;
    height: 36px;
    border: 3px solid #f8151c;
}
.mark-arrow {
    position: absolute;
    left: 0;
    top: 0;
    pointer-events: none;
}
.clip-top {
    position: absolute;
    left: 959px;
    top: -2px;
    width: 149px;
    height: 7px;
    border: 1px solid #555;
}
```
